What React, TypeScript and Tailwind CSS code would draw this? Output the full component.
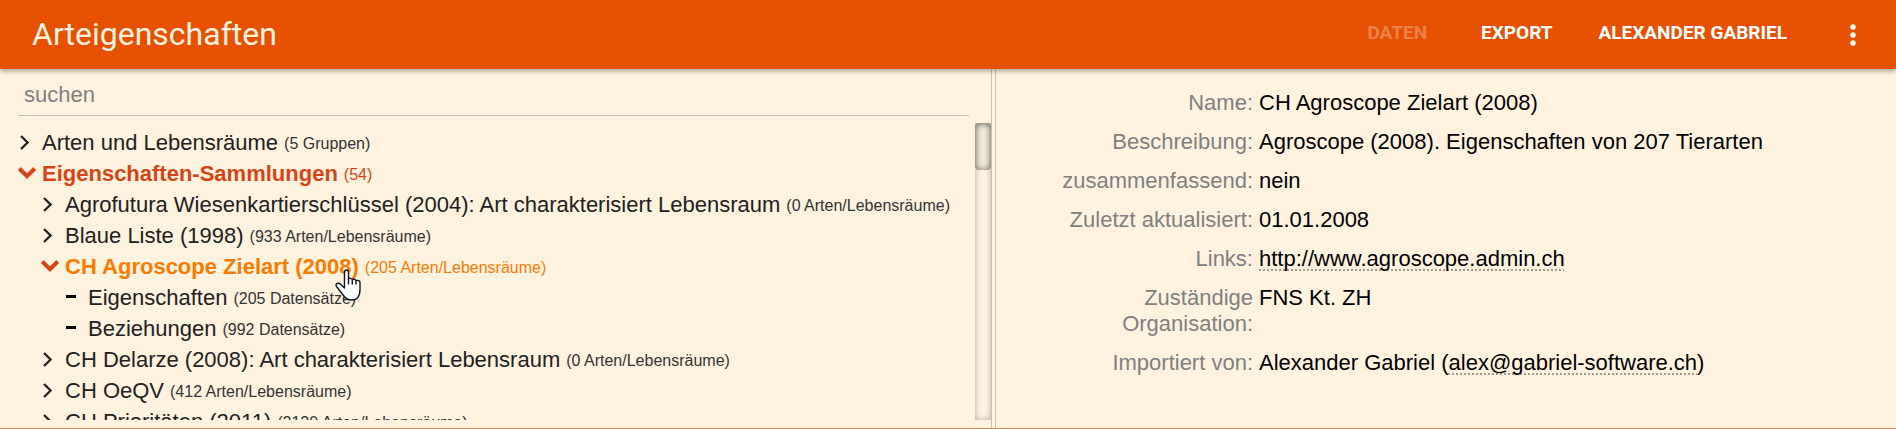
import type { ReactNode } from "react";

type Kind = "closed" | "open" | "leaf";
type State = "normal" | "path" | "active";

interface TreeRow {
  label: string;
  info: string;
  level: 0 | 1 | 2;
  kind: Kind;
  state: State;
}

const rows: TreeRow[] = [
  { label: "Arten und Lebensräume", info: "(5 Gruppen)", level: 0, kind: "closed", state: "normal" },
  { label: "Eigenschaften-Sammlungen", info: "(54)", level: 0, kind: "open", state: "path" },
  { label: "Agrofutura Wiesenkartierschlüssel (2004): Art charakterisiert Lebensraum", info: "(0 Arten/Lebensräume)", level: 1, kind: "closed", state: "normal" },
  { label: "Blaue Liste (1998)", info: "(933 Arten/Lebensräume)", level: 1, kind: "closed", state: "normal" },
  { label: "CH Agroscope Zielart (2008)", info: "(205 Arten/Lebensräume)", level: 1, kind: "open", state: "active" },
  { label: "Eigenschaften", info: "(205 Datensätze)", level: 2, kind: "leaf", state: "normal" },
  { label: "Beziehungen", info: "(992 Datensätze)", level: 2, kind: "leaf", state: "normal" },
  { label: "CH Delarze (2008): Art charakterisiert Lebensraum", info: "(0 Arten/Lebensräume)", level: 1, kind: "closed", state: "normal" },
  { label: "CH OeQV", info: "(412 Arten/Lebensräume)", level: 1, kind: "closed", state: "normal" },
  { label: "CH Prioritäten (2011)", info: "(2120 Arten/Lebensräume)", level: 1, kind: "closed", state: "normal" },
];

const indent = { 0: "pl-[15px]", 1: "pl-[38px]", 2: "pl-[61px]" };

const labelStyle = {
  normal: "text-[#212121]",
  path: "font-bold text-[#d84315]",
  active: "font-bold text-[#f57c00]",
};

const infoStyle = {
  normal: "text-[#333333]",
  path: "text-[#d84315]",
  active: "text-[#f57c00]",
};

function RowIcon({ kind }: { kind: Kind }) {
  return (
    <svg viewBox="0 0 24 24" className="h-6 w-6 shrink-0" fill="none" aria-hidden="true">
      {kind === "closed" && <path d="M6 5 12.600 11.500 6 18" stroke="#212121" strokeWidth="2.300" />}
      {kind === "open" && <path d="M4.300 6.500 12 14.200 19.700 6.500" stroke="#d84315" strokeWidth="4" />}
      {kind === "leaf" && <path d="M5 10.500H15" stroke="#000000" strokeWidth="3" />}
    </svg>
  );
}

function HandCursor() {
  return (
    <svg viewBox="0 0 26 32" className="pointer-events-none absolute -right-0.5 top-[18px] z-10 h-8 w-[26px]" aria-hidden="true">
      <path
        d="M9.500 19V3.200C9.500 1.800 10.300 1 11.500 1S13.500 1.800 13.500 3.200V10C14 9 17 9 17.300 10.800C18 9.800 20.800 10 21 11.800C22 11 25 11.300 25 13.500V20C25 26.500 22.300 31 16.800 31C12.600 31 10.500 29.300 8.500 26.500L1.500 17.500C.6 16.300 1 15 2.200 14.500C3.400 14 4.600 14.400 5.600 15.300Z"
        fill="#ffffff"
        stroke="#101828"
        strokeWidth="1.400"
        strokeLinejoin="round"
      />
      <path d="M13.500 10V15.500M17.300 11V15.500M21 12V15.500" stroke="#101828" strokeWidth="1.400" fill="none" />
    </svg>
  );
}

function Field({ label, children }: { label: string; children: ReactNode }) {
  return (
    <div className="flex gap-1.5">
      <dt className="w-[237px] shrink-0 text-right text-[#808080]">{label}</dt>
      <dd className="text-black">{children}</dd>
    </div>
  );
}

const linkStyle =
  "underline decoration-dotted decoration-2 decoration-[#a39b90] underline-offset-[3px] [text-decoration-skip-ink:none]";

export default function App() {
  return (
    <div className="flex h-screen flex-col border-b border-[#e0884f] bg-[#fff3e0] font-['Liberation_Sans',Arial,sans-serif]">
      <header className="z-10 flex h-[69px] shrink-0 items-center bg-[#e65100] pl-8 pr-7 font-[Roboto,sans-serif] shadow-[0_2px_5px_rgba(0,0,0,0.35)]">
        <h1 className="flex-1 pb-0.5 text-[32px] leading-10 text-[#fff3e0]">Arteigenschaften</h1>
        <nav className="flex items-center pb-1 text-[19px] font-bold leading-6 text-white">
          <button type="button" disabled className="px-[27px] text-white/30">DATEN</button>
          <button type="button" className="px-[27px]">EXPORT</button>
          <button type="button" className="pl-[19px] pr-[27px]">ALEXANDER GABRIEL</button>
        </nav>
        <button type="button" aria-label="Menü" className="ml-6 p-0">
          <svg viewBox="0 0 30 30" className="h-[30px] w-[30px]" fill="#ffffff" aria-hidden="true">
            <circle cx="15" cy="7" r="2.700" />
            <circle cx="15" cy="15" r="2.700" />
            <circle cx="15" cy="23" r="2.700" />
          </svg>
        </button>
      </header>

      <div className="flex min-h-0 flex-1">
        <section className="flex w-[991px] min-w-0 shrink flex-col pb-2">
          <div className="ml-[18px] mr-[22px] border-b border-[#c4c0bd] pt-1.5">
            <input
              type="text"
              aria-label="suchen"
              placeholder="suchen"
              className="block h-10 w-full bg-transparent pl-1.5 text-[22px] outline-none placeholder:text-[#808080]"
            />
          </div>
          <div className="mt-[7px] flex min-h-0 flex-1">
            <ul className="min-w-0 flex-1 overflow-hidden pt-1">
              {rows.map((row) => (
                <li key={row.label} className={`flex h-[31px] items-center whitespace-nowrap ${indent[row.level]}`}>
                  <RowIcon kind={row.kind} />
                  <span className={`relative ml-[3px] text-[22px] leading-[31px] ${labelStyle[row.state]}`}>
                    {row.label}
                    {row.state === "active" && <HandCursor />}
                  </span>
                  <span className={`ml-1.5 pt-0.5 text-base ${infoStyle[row.state]}`}>{row.info}</span>
                </li>
              ))}
            </ul>
            <div className="w-4 shrink-0 shadow-[inset_0_0_6px_rgba(0,0,0,0.3)]">
              <div className="h-[47px] rounded bg-[#85b09a]/10 shadow-[inset_0_0_7px_rgba(0,0,0,0.5)]" />
            </div>
          </div>
        </section>

        <div className="w-[5px] shrink-0 border-x border-[#c4c0c0]" />

        <main className="min-w-0 flex-1 pl-5 pt-[21px]">
          <dl className="flex flex-col gap-[13px] text-[22px] leading-[26px]">
            <Field label="Name:">CH Agroscope Zielart (2008)</Field>
            <Field label="Beschreibung:">Agroscope (2008). Eigenschaften von 207 Tierarten</Field>
            <Field label="zusammenfassend:">nein</Field>
            <Field label="Zuletzt aktualisiert:">01.01.2008</Field>
            <Field label="Links:">
              <a href="http://www.agroscope.admin.ch" className={linkStyle}>http://www.agroscope.admin.ch</a>
            </Field>
            <Field label="Zuständige Organisation:">FNS Kt. ZH</Field>
            <Field label="Importiert von:">
              Alexander Gabriel (<a href="mailto:alex@gabriel-software.ch" className={linkStyle}>alex@gabriel-software.ch</a>)
            </Field>
          </dl>
        </main>
      </div>
    </div>
  );
}
